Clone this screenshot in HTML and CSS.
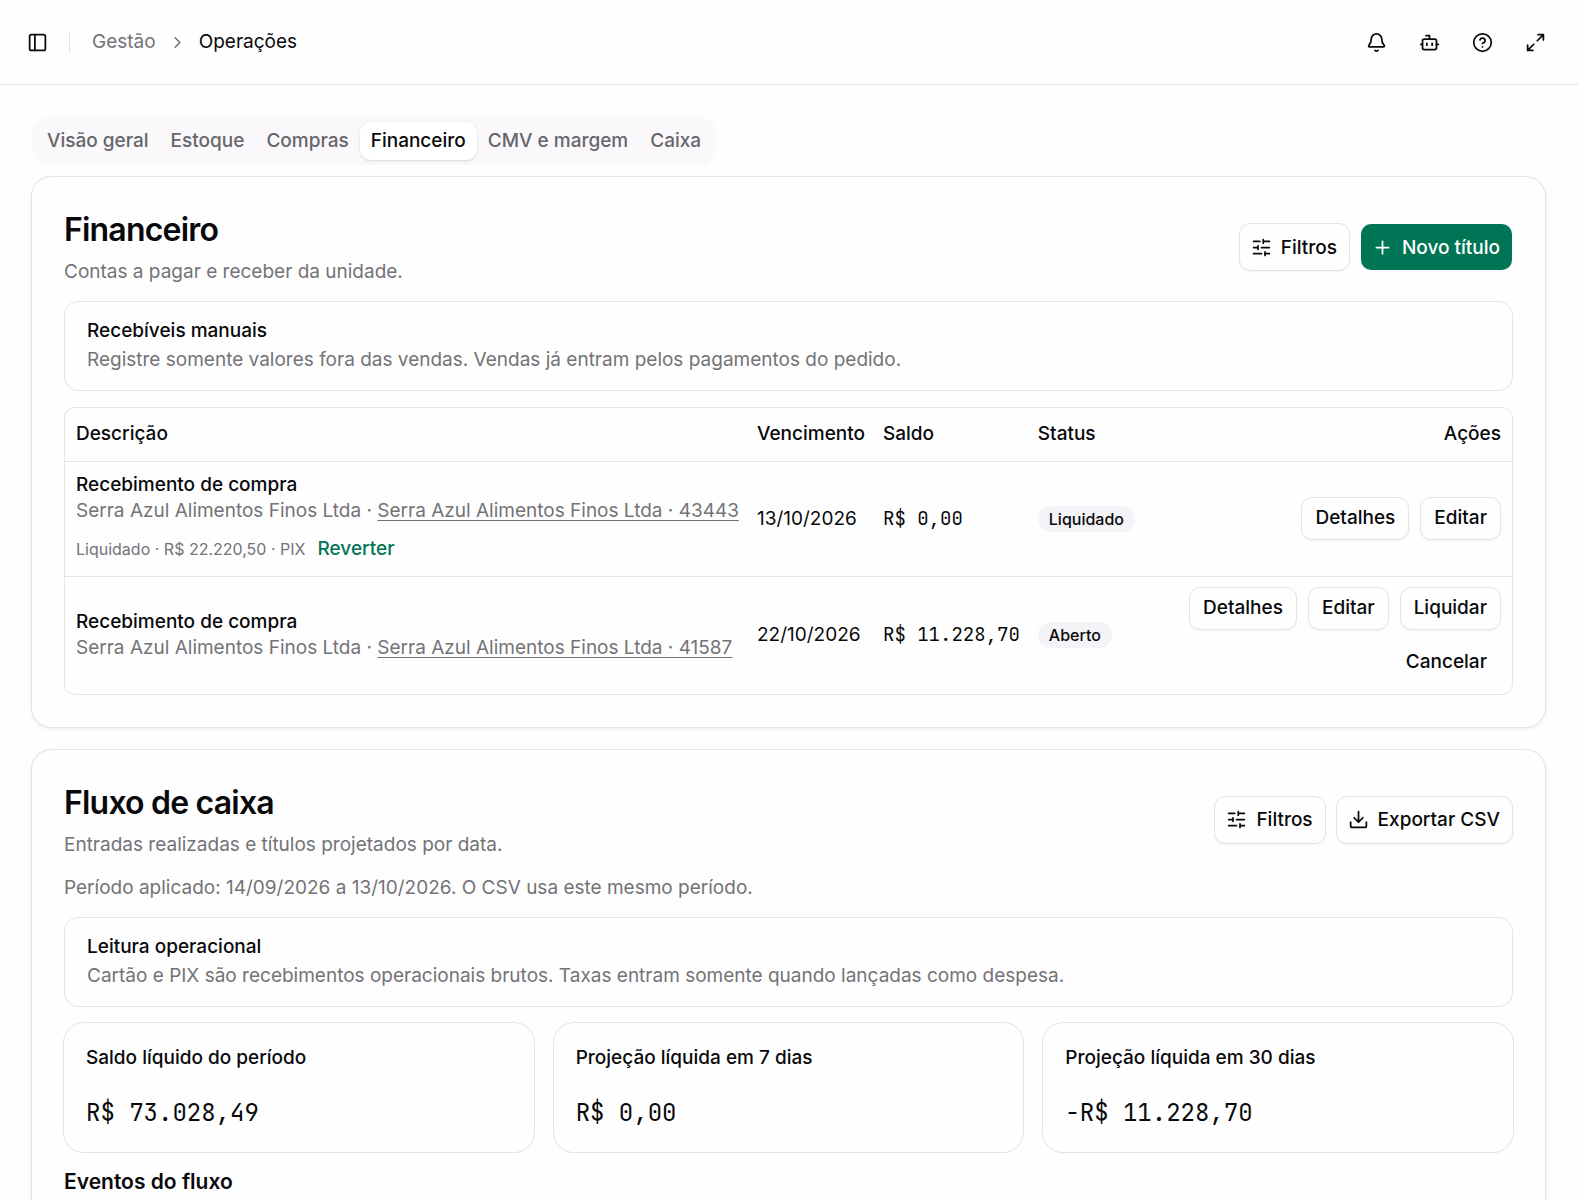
FILE: index.html
```html
<!DOCTYPE html>
<html lang="pt-BR">
<head>
    <meta charset="UTF-8">
    <meta name="viewport" content="width=device-width, initial-scale=1.0">
    <title>Operações</title>
    <link rel="stylesheet" href="styles.css">
</head>
<body>
    <!-- Barra superior -->
    <header class="topbar">
        <div class="topbar-left">
            <button type="button" class="icon-btn" aria-label="Alternar menu">
                <svg class="icon" viewBox="0 0 24 24"><rect x="3" y="3" width="18" height="18" rx="2"/><path d="M9 3v18"/></svg>
            </button>
            <span class="separator"></span>
            <nav class="breadcrumb" aria-label="Trilha">
                <a href="#">Gestão</a>
                <svg class="icon icon-sm" viewBox="0 0 24 24"><path d="m9 18 6-6-6-6"/></svg>
                <span class="current">Operações</span>
            </nav>
        </div>
        <div class="topbar-right">
            <button type="button" class="icon-btn" aria-label="Notificações">
                <svg class="icon" viewBox="0 0 24 24"><path d="M10.268 21a2 2 0 0 0 3.464 0"/><path d="M3.262 15.326A1 1 0 0 0 4 17h16a1 1 0 0 0 .74-1.673C19.41 13.956 18 12.499 18 8A6 6 0 0 0 6 8c0 4.499-1.411 5.956-2.738 7.326"/></svg>
            </button>
            <button type="button" class="icon-btn" aria-label="Assistente">
                <svg class="icon" viewBox="0 0 24 24"><path d="M12 8V4H8"/><rect x="4" y="8" width="16" height="12" rx="2"/><path d="M2 14h2M20 14h2M15 13v2M9 13v2"/></svg>
            </button>
            <button type="button" class="icon-btn" aria-label="Ajuda">
                <svg class="icon" viewBox="0 0 24 24"><circle cx="12" cy="12" r="10"/><path d="M9.09 9a3 3 0 0 1 5.83 1c0 2-3 3-3 3M12 17h.01"/></svg>
            </button>
            <button type="button" class="icon-btn" aria-label="Tela cheia">
                <svg class="icon" viewBox="0 0 24 24"><path d="M15 3h6v6M21 3l-7 7M3 21l7-7M9 21H3v-6"/></svg>
            </button>
        </div>
    </header>

    <main class="page">
        <!-- Abas -->
        <div class="tabs" role="tablist">
            <button type="button" class="tab" role="tab">Visão geral</button>
            <button type="button" class="tab" role="tab">Estoque</button>
            <button type="button" class="tab" role="tab">Compras</button>
            <button type="button" class="tab active" role="tab" aria-selected="true">Financeiro</button>
            <button type="button" class="tab" role="tab">CMV e margem</button>
            <button type="button" class="tab" role="tab">Caixa</button>
        </div>

        <div class="sections">
            <!-- Financeiro -->
            <section class="card">
                <div class="card-header">
                    <div>
                        <h2>Financeiro</h2>
                        <p class="muted">Contas a pagar e receber da unidade.</p>
                    </div>
                    <div class="card-actions">
                        <button type="button" class="btn">
                            <svg class="icon" viewBox="0 0 24 24"><path d="M10 5H3M12 19H3M14 3v4M16 17v4M21 12h-9M21 19h-5M21 5h-7M8 10v4M8 12H3"/></svg>
                            Filtros
                        </button>
                        <button type="button" class="btn btn-primary">
                            <svg class="icon" viewBox="0 0 24 24"><path d="M5 12h14M12 5v14"/></svg>
                            Novo título
                        </button>
                    </div>
                </div>

                <div class="alert">
                    <strong>Recebíveis manuais</strong>
                    <p class="muted">Registre somente valores fora das vendas. Vendas já entram pelos pagamentos do pedido.</p>
                </div>

                <div class="table-wrap">
                    <table>
                        <thead>
                            <tr>
                                <th>Descrição</th>
                                <th>Vencimento</th>
                                <th>Saldo</th>
                                <th>Status</th>
                                <th class="right">Ações</th>
                            </tr>
                        </thead>
                        <tbody>
                            <tr>
                                <td>
                                    <div class="item-title">Recebimento de compra</div>
                                    <div class="muted">Serra Azul Alimentos Finos Ltda · <a href="#">Serra Azul Alimentos Finos Ltda · 43443</a></div>
                                    <div class="settlement">
                                        <span>Liquidado · R$ 22.220,50 · PIX</span>
                                        <button type="button" class="link-btn">Reverter</button>
                                    </div>
                                </td>
                                <td>13/10/2026</td>
                                <td class="mono">R$ 0,00</td>
                                <td><span class="badge">Liquidado</span></td>
                                <td>
                                    <div class="row-actions">
                                        <button type="button" class="btn btn-sm">Detalhes</button>
                                        <button type="button" class="btn btn-sm">Editar</button>
                                    </div>
                                </td>
                            </tr>
                            <tr>
                                <td>
                                    <div class="item-title">Recebimento de compra</div>
                                    <div class="muted">Serra Azul Alimentos Finos Ltda · <a href="#">Serra Azul Alimentos Finos Ltda · 41587</a></div>
                                </td>
                                <td>22/10/2026</td>
                                <td class="mono">R$ 11.228,70</td>
                                <td><span class="badge">Aberto</span></td>
                                <td>
                                    <div class="row-actions">
                                        <button type="button" class="btn btn-sm">Detalhes</button>
                                        <button type="button" class="btn btn-sm">Editar</button>
                                        <button type="button" class="btn btn-sm">Liquidar</button>
                                        <button type="button" class="btn btn-sm btn-ghost">Cancelar</button>
                                    </div>
                                </td>
                            </tr>
                        </tbody>
                    </table>
                </div>
            </section>

            <!-- Fluxo de caixa -->
            <section class="card">
                <div class="card-header">
                    <div>
                        <h2>Fluxo de caixa</h2>
                        <p class="muted">Entradas realizadas e títulos projetados por data.</p>
                    </div>
                    <div class="card-actions">
                        <button type="button" class="btn">
                            <svg class="icon" viewBox="0 0 24 24"><path d="M10 5H3M12 19H3M14 3v4M16 17v4M21 12h-9M21 19h-5M21 5h-7M8 10v4M8 12H3"/></svg>
                            Filtros
                        </button>
                        <button type="button" class="btn">
                            <svg class="icon" viewBox="0 0 24 24"><path d="M12 15V3M21 15v4a2 2 0 0 1-2 2H5a2 2 0 0 1-2-2v-4M7 10l5 5 5-5"/></svg>
                            Exportar CSV
                        </button>
                    </div>
                </div>

                <p class="muted">Período aplicado: 14/09/2026 a 13/10/2026. O CSV usa este mesmo período.</p>

                <div class="alert">
                    <strong>Leitura operacional</strong>
                    <p class="muted">Cartão e PIX são recebimentos operacionais brutos. Taxas entram somente quando lançadas como despesa.</p>
                </div>

                <div class="stats">
                    <div class="stat">
                        <div class="stat-label">Saldo líquido do período</div>
                        <div class="stat-value">R$ 73.028,49</div>
                    </div>
                    <div class="stat">
                        <div class="stat-label">Projeção líquida em 7 dias</div>
                        <div class="stat-value">R$ 0,00</div>
                    </div>
                    <div class="stat">
                        <div class="stat-label">Projeção líquida em 30 dias</div>
                        <div class="stat-value">-R$ 11.228,70</div>
                    </div>
                </div>

                <h3>Eventos do fluxo</h3>
            </section>
        </div>
    </main>
</body>
</html>
```
FILE: styles.css
```css
* {
    box-sizing: border-box;
}
body {
    margin: 0;
    font-family: Inter, "Liberation Sans", sans-serif;
    font-size: 19px;
    line-height: 27px;
    color: #09090b;
    background-color: #fefefe;
}
h2, h3, p {
    margin: 0;
}
button {
    font: inherit;
    color: inherit;
    background: none;
    border: none;
    padding: 0;
    cursor: pointer;
}
.icon {
    width: 21px;
    height: 21px;
    flex-shrink: 0;
    fill: none;
    stroke: currentColor;
    stroke-width: 2;
    stroke-linecap: round;
    stroke-linejoin: round;
}
.icon-sm {
    width: 19px;
    height: 19px;
}
.muted {
    color: #737378;
}

/* Barra superior */
.topbar {
    display: flex;
    justify-content: space-between;
    align-items: center;
    height: 85px;
    padding: 0 22px 0 16px;
    border-bottom: 1px solid #e4e4e7;
}
.topbar-left, .topbar-right {
    display: flex;
    align-items: center;
    gap: 11px;
}
.icon-btn {
    display: flex;
    justify-content: center;
    align-items: center;
    width: 42px;
    height: 42px;
}
.separator {
    width: 1px;
    height: 22px;
    background-color: #e4e4e7;
}
.breadcrumb {
    display: flex;
    align-items: center;
    gap: 12px;
    margin-left: 11px;
    line-height: 26px;
    color: #737378;
}
.breadcrumb a {
    color: inherit;
    text-decoration: none;
}
.breadcrumb .current {
    color: #09090b;
}

/* Abas */
.page {
    padding: 32px 33px 32px 32px;
}
.tabs {
    display: inline-flex;
    padding: 5px 4px;
    border-radius: 16px;
    background-color: #faf8fb;
}
.tab {
    height: 38px;
    padding: 0 11px 1px;
    border-radius: 11px;
    font-weight: 500;
    color: #66666b;
}
.tab.active {
    color: #09090b;
    background-color: #fff;
    box-shadow: 0 1px 3px rgba(0, 0, 0, 0.14);
}

/* Cartões */
.sections {
    display: grid;
    gap: 23px;
    margin-top: 12px;
}
.card {
    display: flex;
    flex-direction: column;
    gap: 16px;
    padding: 32px;
    border-radius: 20px;
    box-shadow: 0 0 0 1px #e4e4e7, 0 1px 4px rgba(0, 0, 0, 0.12);
    background-color: #fefefe;
}
.card-header {
    display: flex;
    justify-content: space-between;
    align-items: center;
}
h2 {
    margin-bottom: 7px;
    font-size: 32px;
    line-height: 42px;
    font-weight: 600;
    letter-spacing: -0.025em;
}
h3 {
    font-size: 21px;
    line-height: 28px;
    font-weight: 600;
}
.card-actions {
    display: flex;
    gap: 10px;
}
.btn {
    display: inline-flex;
    align-items: center;
    gap: 9px;
    height: 48px;
    padding: 0 12px 0 11px;
    border: 1px solid #e4e4e7;
    border-radius: 11px;
    font-weight: 500;
    background-color: #fefefe;
    background-clip: padding-box;
    box-shadow: 0 1px 2px rgba(0, 0, 0, 0.04);
}
.btn-primary {
    color: #fff;
    background-color: #007556;
    border-color: transparent;
    box-shadow: none;
}
.btn-sm {
    height: 43px;
    padding: 0 13px 1px;
}
.btn-ghost {
    border-color: transparent;
    background: none;
    box-shadow: none;
}
.alert {
    padding: 16px 22px 17px;
    border: 1px solid #e4e4e7;
    border-radius: 14px;
    line-height: 26px;
}
.alert strong {
    display: block;
    margin-bottom: 3px;
    font-weight: 500;
}

/* Tabela */
.table-wrap {
    border: 1px solid #e4e4e7;
    border-radius: 11px;
}
table {
    width: 100%;
    border-collapse: collapse;
    line-height: 26px;
}
th, td {
    padding: 10px 9px;
    text-align: left;
    white-space: nowrap;
}
th:first-child, td:first-child {
    padding-left: 11px;
}
th:last-child, td:last-child {
    padding-right: 11px;
}
th {
    height: 53px;
    font-weight: 500;
}
tr {
    border-bottom: 1px solid #e4e4e7;
}
tbody tr:last-child {
    border-bottom: none;
}
th.right {
    text-align: right;
}
td a {
    color: inherit;
    text-underline-offset: 3px;
}
.item-title {
    font-weight: 500;
}
.settlement {
    display: flex;
    align-items: center;
    gap: 12px;
    margin-top: 9px;
    font-size: 16px;
    color: #737378;
}
.link-btn {
    height: 33px;
    font-size: 19px;
    font-weight: 500;
    color: #007556;
}
.mono, .stat-value {
    font-family: "JetBrains Mono", "DejaVu Sans Mono", monospace;
}
.badge {
    display: inline-block;
    padding: 0 11px;
    border-radius: 13px;
    font-size: 16px;
    font-weight: 500;
    background-color: #f4f3f7;
    vertical-align: middle;
}
.row-actions {
    display: flex;
    flex-wrap: wrap;
    justify-content: flex-end;
    gap: 11px;
}

/* Indicadores */
.stats {
    display: grid;
    grid-template-columns: repeat(3, 1fr);
    gap: 20px;
}
.stat {
    padding: 22px;
    border-radius: 20px;
    box-shadow: 0 0 0 1px #e4e4e7, 0 1px 2px rgba(0, 0, 0, 0.04);
}
.stat-label {
    margin-bottom: 25px;
    line-height: 26px;
    font-weight: 500;
}
.stat-value {
    font-size: 24px;
    line-height: 34px;
}
```
